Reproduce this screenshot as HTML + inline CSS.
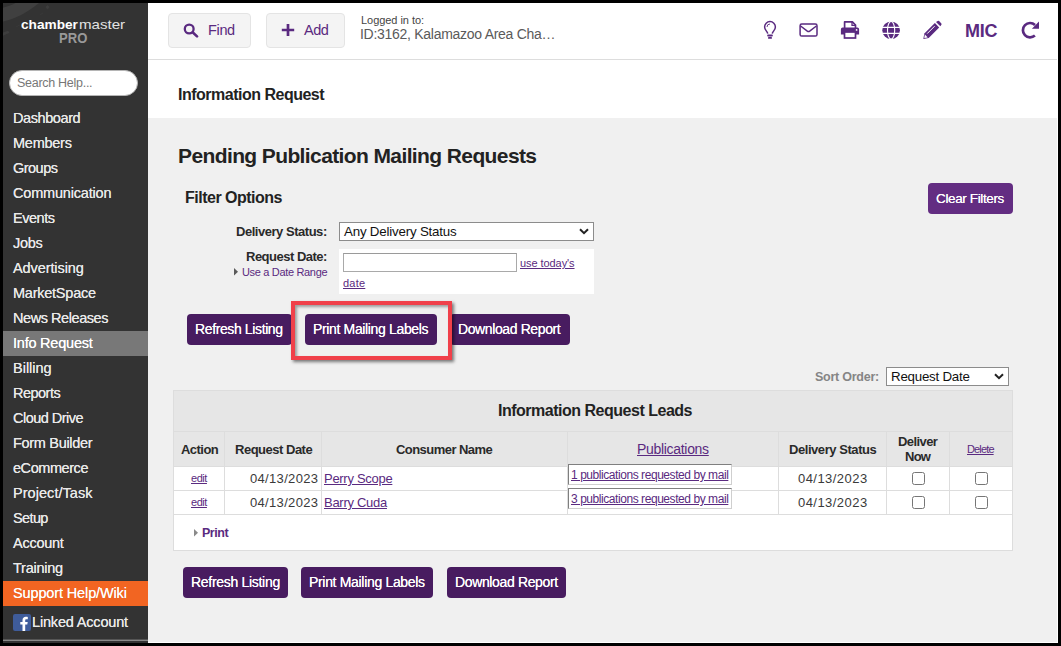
<!DOCTYPE html>
<html lang="en">
<head>
<meta charset="utf-8">
<title>Information Request</title>
<style>
*{box-sizing:border-box;margin:0;padding:0}
html,body{width:1061px;height:646px;overflow:hidden;background:#000}
body{font-family:"Liberation Sans",sans-serif;color:#222;position:relative}
/* all coordinates are absolute page pixels */
.abs{position:absolute;white-space:nowrap}
#frame{position:absolute;left:3px;top:3px;width:1055px;height:640px;background:#f0f0f0}
#edgeR{position:absolute;left:1057px;top:3px;width:1px;height:640px;background:#fff}
#edgeB{position:absolute;left:148px;top:642px;width:910px;height:1px;background:#fff}
#side{position:absolute;left:3px;top:3px;width:145px;height:640px;background:#333;overflow:hidden}
#top{position:absolute;left:148px;top:3px;width:910px;height:57px;background:#fff;border-bottom:1px solid #ddd}
#title{position:absolute;left:148px;top:60px;width:910px;height:58px;background:#fff}
.t{position:absolute;white-space:nowrap;line-height:20px}
.menu{color:#e8e8e8;font-size:14.5px;left:13px;text-shadow:0 0 .4px #e8e8e8}
.tbtn{position:absolute;top:13px;height:35px;background:#f4f4f4;border:1px solid #e4e4e4;border-radius:4px}
.pur{color:#5a2a80}
.btn{position:absolute;height:31px;border-radius:4px;background:#481c60}
.btn .t{color:#fff;font-size:14px;top:5px;text-shadow:0 0 .6px #fff}
a{color:#5a2a80;text-decoration:underline}
.lbl{font-size:13px;font-weight:bold;color:#2a2a2a}
.sel{position:absolute;background:#fff;border:1px solid #8c8c8c}
.sel .t{font-size:13.33px;color:#111}
.chev{position:absolute;width:10px;height:7px}
.tri{position:absolute;width:0;height:0;border-left:4px solid #666;border-top:3.5px solid transparent;border-bottom:3.5px solid transparent}
.ln{position:absolute;background:#ddd}
.th{font-size:13px;font-weight:bold;color:#2a2a2a}
.td{font-size:13px;color:#3a3a3a}
.cb{position:absolute;width:13px;height:13px;border:1px solid #767676;border-radius:2.5px;background:#fff}
.pub{position:absolute;height:21px;border:1px solid;border-color:#7f7f7f #cfcfcf #cfcfcf #7f7f7f;background:#fff}
/*FIT*/
#m1{letter-spacing:-0.41px}
#m2{letter-spacing:-0.25px}
#m3{letter-spacing:-0.52px}
#m4{letter-spacing:-0.19px}
#m5{letter-spacing:-0.48px}
#m6{letter-spacing:-0.33px}
#m7{letter-spacing:-0.09px}
#m8{letter-spacing:-0.24px}
#m9{letter-spacing:-0.44px}
#m10{letter-spacing:-0.22px}
#m11{letter-spacing:0.0px}
#m12{letter-spacing:-0.52px}
#m13{letter-spacing:-0.52px}
#m14{letter-spacing:-0.31px}
#m15{letter-spacing:-0.44px}
#m16{letter-spacing:0.05px}
#m17{letter-spacing:-0.62px}
#m18{letter-spacing:-0.25px}
#m19{letter-spacing:-0.26px}
#m20{letter-spacing:-0.13px}
#m21{letter-spacing:-0.17px}
#sh{letter-spacing:-0.28px}
#tf{letter-spacing:-0.34px}
#ta{letter-spacing:-0.45px}
#tl1{letter-spacing:-0.05px}
#tl2{letter-spacing:-0.28px}
#mic{letter-spacing:-0.3px}
#h1{letter-spacing:-0.5px}
#h2{letter-spacing:-0.61px}
#h3{letter-spacing:-0.5px}
#cf{letter-spacing:-0.37px}
#l1{letter-spacing:-0.47px}
#l2{letter-spacing:-0.5px}
#l3{letter-spacing:-0.33px}
#s1{letter-spacing:-0.2px}
#k1{letter-spacing:-0.07px}
#k2{letter-spacing:0.22px}
#b1{letter-spacing:-0.38px}
#b2{letter-spacing:-0.35px}
#b3{letter-spacing:-0.39px}
#so{letter-spacing:-0.25px}
#s2{letter-spacing:-0.24px}
#cap{letter-spacing:-0.49px}
#c1{letter-spacing:-0.54px}
#c2{letter-spacing:-0.49px}
#c3{letter-spacing:-0.55px}
#c4{letter-spacing:-0.31px}
#c5{letter-spacing:-0.44px}
#c6{letter-spacing:-0.58px}
#c7{letter-spacing:-0.75px}
#c8{letter-spacing:-0.86px}
#e1{letter-spacing:-0.45px}
#e2{letter-spacing:-0.45px}
#d1{letter-spacing:0.33px}
#d3{letter-spacing:0.33px}
#n1{letter-spacing:-0.29px}
#n2{letter-spacing:-0.28px}
#p1{letter-spacing:-0.44px}
#p2{letter-spacing:-0.44px}
#d2{letter-spacing:0.45px}
#d4{letter-spacing:0.45px}
#pr{letter-spacing:-0.47px}
#b4{letter-spacing:-0.3px}
#b5{letter-spacing:-0.32px}
#b6{letter-spacing:-0.36px}
/*ENDFIT*/
</style>
</head>
<body>
<div id="frame"></div>

<!-- ============ SIDEBAR ============ -->
<div id="side">
  <svg class="abs" style="left:0;top:0" width="145" height="60" viewBox="0 0 145 60">
    <path d="M12.5 0 H36 C30 5 22 10 17 12.5 C11 15.5 5 17.5 0 18.5 V4.7 C4 3.5 9 2 12.5 0Z" fill="#404040"/>
    <path d="M44.5 2 L46.5 4 L44.5 6.5 L42.5 4Z" fill="#3d3d3d"/>
    <path d="M37 11.5 L40 9.5 L40.5 10 L37.5 12Z" fill="#3b3b3b"/>
    <path d="M13 23.5 L17 21.5 L17.5 22 L13.5 24Z" fill="#3b3b3b"/>
    <path d="M0 29.5 L5 27.8 L6.5 29.8 L0 32.8Z" fill="#3e3e3e"/>
  </svg>
</div>
<div class="t" id="lg1" style="left:21px;top:15px;font-size:13px;color:#fff;font-weight:bold;transform-origin:0 0;transform:scaleX(1.05)">chamber</div>
<div class="t" id="lg2" style="left:78.5px;top:15px;font-size:13px;color:#e2e2e2;transform-origin:0 0;transform:scaleX(1.16)">master</div>
<div class="t" id="lg3" style="left:59px;top:28px;font-size:14.5px;color:#999;font-weight:bold;transform-origin:0 0;transform:scaleX(.9)">PRO</div>
<div class="abs" style="left:9px;top:70px;width:129px;height:26px;border-radius:13px;background:#fff;border:1px solid #b5b5b5"></div>
<div class="t" id="sh" style="left:17px;top:73px;font-size:12.5px;color:#777">Search Help...</div>

<div class="abs" style="left:3px;top:331px;width:145px;height:25px;background:#787878"></div>
<div class="abs" style="left:3px;top:581px;width:145px;height:25px;background:#f26522"></div>
<div class="t menu" id="m1" style="top:108px">Dashboard</div>
<div class="t menu" id="m2" style="top:133px">Members</div>
<div class="t menu" id="m3" style="top:158px">Groups</div>
<div class="t menu" id="m4" style="top:183px">Communication</div>
<div class="t menu" id="m5" style="top:208px">Events</div>
<div class="t menu" id="m6" style="top:233px">Jobs</div>
<div class="t menu" id="m7" style="top:258px">Advertising</div>
<div class="t menu" id="m8" style="top:283px">MarketSpace</div>
<div class="t menu" id="m9" style="top:308px">News Releases</div>
<div class="t menu" id="m10" style="top:333px;color:#fff;text-shadow:0 0 .5px #fff">Info Request</div>
<div class="t menu" id="m11" style="top:358px">Billing</div>
<div class="t menu" id="m12" style="top:383px">Reports</div>
<div class="t menu" id="m13" style="top:408px">Cloud Drive</div>
<div class="t menu" id="m14" style="top:433px">Form Builder</div>
<div class="t menu" id="m15" style="top:458px">eCommerce</div>
<div class="t menu" id="m16" style="top:483px">Project/Task</div>
<div class="t menu" id="m17" style="top:508px">Setup</div>
<div class="t menu" id="m18" style="top:533px">Account</div>
<div class="t menu" id="m19" style="top:558px">Training</div>
<div class="t menu" id="m20" style="top:583px;color:#fff">Support Help/Wiki</div>
<svg class="abs" style="left:13px;top:614px" width="18" height="17" viewBox="0 0 18 17"><rect width="18" height="17" rx="2" fill="#3f5c9a"/><path d="M12.2 17 V10.6 H14.3 L14.7 8 H12.2 V6.5 C12.2 5.7 12.5 5.2 13.5 5.2 H14.8 V2.9 C14.5 2.85 13.7 2.75 12.8 2.75 C10.8 2.75 9.5 3.95 9.5 6.2 V8 H7.3 V10.6 H9.5 V17Z" fill="#fff"/></svg>
<div class="t menu" id="m21" style="left:32px;top:612px">Linked Account</div>
<div class="abs" style="left:3px;top:639px;width:145px;height:1px;background:#555"></div><div class="abs" style="left:3px;top:640px;width:145px;height:1px;background:#888"></div>

<!-- ============ TOP BAR ============ -->
<div id="top"></div>
<div class="tbtn" style="left:168px;width:83px"></div>
<svg class="abs" style="left:183px;top:23px" width="16" height="15" viewBox="0 0 16 15"><circle cx="6.2" cy="6" r="4.4" fill="none" stroke="#5a2a80" stroke-width="2.3"/><path d="M9.6 9.3 L14 13.4" stroke="#5a2a80" stroke-width="2.6" stroke-linecap="round"/></svg>
<div class="t pur" id="tf" style="left:208px;top:20px;font-size:14.5px">Find</div>
<div class="tbtn" style="left:266px;width:79px"></div>
<svg class="abs" style="left:281px;top:23px" width="14" height="14" viewBox="0 0 14 14"><path d="M7 0.9 V13.1 M0.8 7 H13.2" stroke="#5a2a80" stroke-width="2.7"/></svg>
<div class="t pur" id="ta" style="left:304px;top:20px;font-size:14.5px">Add</div>
<div class="t" id="tl1" style="left:361px;top:10px;font-size:11px;color:#444">Logged in to:</div>
<div class="t" id="tl2" style="left:360px;top:24px;font-size:14px;color:#5a5a5a">ID:3162, Kalamazoo Area Cha…</div>
<!-- lightbulb -->
<svg class="abs" style="left:762px;top:20px" width="16" height="20" viewBox="0 0 16 20"><path d="M5.7 13.6 C5.6 11.6 2.6 10.2 2.6 7 A5.4 5.4 0 0 1 13.4 7 C13.4 10.2 10.4 11.6 10.3 13.6" fill="none" stroke="#5a2a80" stroke-width="1.5"/><path d="M5 7 A3 3 0 0 1 8 4" fill="none" stroke="#5a2a80" stroke-width="0.9"/><rect x="5.2" y="14.6" width="5.6" height="2" rx=".8" fill="#5a2a80"/><rect x="6" y="16.9" width="4" height="1.9" rx=".9" fill="#5a2a80"/></svg>
<!-- envelope -->
<svg class="abs" style="left:798px;top:22px" width="21" height="16" viewBox="0 0 21 16"><rect x="2.1" y="2.1" width="16.9" height="12" rx="1.6" fill="none" stroke="#5a2a80" stroke-width="1.5"/><path d="M2.6 4 L9.3 9.2 Q10.5 10 11.7 9.2 L18.4 4" fill="none" stroke="#5a2a80" stroke-width="1.5"/></svg>
<!-- print -->
<svg class="abs" style="left:840px;top:20px" width="20" height="20" viewBox="0 0 20 20"><path d="M4.6 8 V1.9 H12.4 L15.5 5 V8" fill="#fff" stroke="#5a2a80" stroke-width="1.7" stroke-linejoin="round"/><path d="M12 1.5 V5.3 H15.8" fill="none" stroke="#5a2a80" stroke-width="1.3"/><path d="M2.6 7.6 H17.4 A1.7 1.7 0 0 1 19.1 9.3 V14.4 H15.6 V11.9 H4.4 V14.4 H0.9 V9.3 A1.7 1.7 0 0 1 2.6 7.6Z" fill="#5a2a80"/><rect x="4.5" y="12" width="11" height="6" fill="#fff" stroke="#5a2a80" stroke-width="1.7"/><circle cx="16.6" cy="9.9" r=".9" fill="#fff"/></svg>
<!-- globe -->
<svg class="abs" style="left:881px;top:20px" width="20" height="20" viewBox="0 0 20 20"><circle cx="10.1" cy="10.2" r="8.8" fill="#5a2a80"/><ellipse cx="10.1" cy="10.2" rx="3.6" ry="8.8" fill="none" stroke="#fff" stroke-width="1.1"/><path d="M1 7.4 H19.2 M1 13.3 H19.2" stroke="#fff" stroke-width="1.2"/></svg>
<!-- pencil -->
<svg class="abs" style="left:922px;top:20px" width="21" height="20" viewBox="0 0 21 20"><path d="M1.3 19 L2.4 13.6 L12.9 3.1 L17.2 7.4 L6.7 17.9Z" fill="#5a2a80"/><path d="M14 2 L15.6 0.9 Q16.4 0.5 17.1 1.1 L19.2 3.2 Q19.8 3.9 19.4 4.7 L18.3 6.3Z" fill="#5a2a80"/><path d="M2.9 14.6 L5.7 17.4 L2.3 18.1Z" fill="#fff"/><path d="M5.2 13.6 L12.6 6.2" stroke="#fff" stroke-width="1"/></svg>
<!-- repeat -->
<svg class="abs" style="left:1020px;top:20px" width="20" height="20" viewBox="0 0 20 20"><path d="M14.9 15.6 A7.2 7.2 0 1 1 15 4.9" fill="none" stroke="#5a2a80" stroke-width="2.7"/><path d="M19 1.6 V8.7 H11.9Z" fill="#5a2a80"/></svg>
<div class="t pur" id="mic" style="left:965px;top:21px;font-size:18px;font-weight:bold">MIC</div>

<!-- ============ PAGE TITLE ============ -->
<div id="title"></div>
<div class="t" id="h1" style="left:178px;top:85px;font-size:16px;font-weight:bold;color:#222">Information Request</div>

<!-- ============ MAIN ============ -->
<div class="t" id="h2" style="left:178px;top:146px;font-size:21px;font-weight:bold;color:#222">Pending Publication Mailing Requests</div>
<div class="t" id="h3" style="left:185px;top:188px;font-size:16px;font-weight:bold;color:#222">Filter Options</div>
<div class="btn" style="left:928px;top:183px;width:85px;background:#632d82"></div>
<div class="t" id="cf" style="left:936px;top:189px;font-size:13.5px;color:#fff;text-shadow:0 0 .5px #fff">Clear Filters</div>

<div class="t lbl" id="l1" style="left:236px;top:222px">Delivery Status:</div>
<div class="sel" style="left:339px;top:222px;width:255px;height:19px"></div>
<div class="t" id="s1" style="left:344px;top:222px;font-size:13.33px;color:#111">Any Delivery Status</div>
<svg class="chev" style="left:579px;top:228px" viewBox="0 0 10 7"><path d="M1 1.2 L5 5.2 L9 1.2" fill="none" stroke="#222" stroke-width="2"/></svg>
<div class="t lbl" id="l2" style="left:246px;top:247px">Request Date:</div>
<svg class="abs" style="left:234px;top:268px" width="5" height="8" viewBox="0 0 5 8"><path d="M0 0 L4 3.75 L0 7.5Z" fill="#5a5a5a"/></svg>
<div class="t pur" id="l3" style="left:242px;top:262px;font-size:11px">Use a Date Range</div>
<div class="abs" style="left:339px;top:249px;width:255px;height:45px;background:#fff"></div>
<div class="abs" style="left:343px;top:253px;width:174px;height:19px;background:#fff;border:1px solid #a9a9a9;border-top-color:#9a9a9a"></div>
<a class="t" id="k1" style="left:520px;top:253px;font-size:11px">use today's</a>
<a class="t" id="k2" style="left:343px;top:273px;font-size:11px">date</a>

<div class="btn" style="left:187px;top:314px;width:105px"><span class="t" id="b1" style="left:8px">Refresh Listing</span></div>
<div class="btn" style="left:305px;top:314px;width:132px"><span class="t" id="b2" style="left:8px">Print Mailing Labels</span></div>
<div class="btn" style="left:450px;top:314px;width:120px"><span class="t" id="b3" style="left:8px">Download Report</span></div>
<div class="abs" style="left:291px;top:301px;width:161px;height:59px;border:4px solid #f0404a;box-shadow:2px 2px 3px rgba(0,0,0,.5), inset 2px 2px 3px rgba(0,0,0,.35)"></div>

<div class="t" id="so" style="left:815px;top:367px;font-size:12.5px;font-weight:bold;color:#858585">Sort Order:</div>
<div class="sel" style="left:886px;top:367px;width:123px;height:19px"></div>
<div class="t" id="s2" style="left:891px;top:367px;font-size:13.33px;color:#111">Request Date</div>
<svg class="chev" style="left:994px;top:373px" viewBox="0 0 10 7"><path d="M1 1.2 L5 5.2 L9 1.2" fill="none" stroke="#222" stroke-width="2"/></svg>

<!-- ============ TABLE ============ -->
<div class="abs" style="left:173px;top:390px;width:840px;height:161px;background:#fff;border:1px solid #ddd"></div>
<div class="abs" style="left:174px;top:391px;width:838px;height:75px;background:#e6e6e6"></div>
<div class="ln" style="left:174px;top:431px;width:838px;height:1px"></div>
<div class="ln" style="left:174px;top:466px;width:838px;height:1px"></div>
<div class="ln" style="left:174px;top:490px;width:838px;height:1px"></div>
<div class="ln" style="left:174px;top:514px;width:838px;height:1px"></div>
<div class="ln" style="left:224px;top:432px;width:1px;height:82px"></div>
<div class="ln" style="left:321px;top:432px;width:1px;height:82px"></div>
<div class="ln" style="left:567px;top:432px;width:1px;height:82px"></div>
<div class="ln" style="left:778px;top:432px;width:1px;height:82px"></div>
<div class="ln" style="left:886px;top:432px;width:1px;height:82px"></div>
<div class="ln" style="left:949px;top:432px;width:1px;height:82px"></div>

<div class="t" id="cap" style="left:498px;top:401px;font-size:16px;font-weight:bold;color:#222">Information Request Leads</div>
<div class="t th" id="c1" style="left:181px;top:440px">Action</div>
<div class="t th" id="c2" style="left:235px;top:440px">Request Date</div>
<div class="t th" id="c3" style="left:396px;top:440px">Consumer Name</div>
<a class="t" id="c4" style="left:637px;top:439px;font-size:14px">Publications</a>
<div class="t th" id="c5" style="left:789px;top:440px">Delivery Status</div>
<div class="t th" id="c6" style="left:898px;top:432px">Deliver</div>
<div class="t th" id="c7" style="left:905px;top:447px">Now</div>
<a class="t" id="c8" style="left:967px;top:439px;font-size:11px">Delete</a>

<a class="t" id="e1" style="left:191px;top:468px;font-size:11px">edit</a>
<div class="t td" id="d1" style="left:250px;top:469px">04/13/2023</div>
<a class="t" id="n1" style="left:324px;top:469px;font-size:13px">Perry Scope</a>
<div class="pub" style="left:568px;top:464px;width:164px"></div>
<a class="t" id="p1" style="left:571px;top:465px;font-size:12px">1 publications requested by mail</a>
<div class="t td" id="d2" style="left:798px;top:469px">04/13/2023</div>
<span class="cb" style="left:912px;top:472px"></span>
<span class="cb" style="left:975px;top:472px"></span>

<a class="t" id="e2" style="left:191px;top:492px;font-size:11px">edit</a>
<div class="t td" id="d3" style="left:250px;top:493px">04/13/2023</div>
<a class="t" id="n2" style="left:324px;top:493px;font-size:13px">Barry Cuda</a>
<div class="pub" style="left:568px;top:488px;width:164px"></div>
<a class="t" id="p2" style="left:571px;top:489px;font-size:12px">3 publications requested by mail</a>
<div class="t td" id="d4" style="left:798px;top:493px">04/13/2023</div>
<span class="cb" style="left:912px;top:496px"></span>
<span class="cb" style="left:975px;top:496px"></span>

<svg class="abs" style="left:194px;top:529px" width="5" height="8" viewBox="0 0 5 8"><path d="M0 0 L4 3.75 L0 7.5Z" fill="#8a8a8a"/></svg>
<div class="t pur" id="pr" style="left:202px;top:523px;font-size:12.5px;font-weight:bold">Print</div>

<div class="btn" style="left:183px;top:567px;width:105px"><span class="t" id="b4" style="left:8px">Refresh Listing</span></div>
<div class="btn" style="left:301px;top:567px;width:132px"><span class="t" id="b5" style="left:8px">Print Mailing Labels</span></div>
<div class="btn" style="left:447px;top:567px;width:119px"><span class="t" id="b6" style="left:8px">Download Report</span></div>

<div id="edgeR"></div><div id="edgeB"></div>
</body>
</html>
